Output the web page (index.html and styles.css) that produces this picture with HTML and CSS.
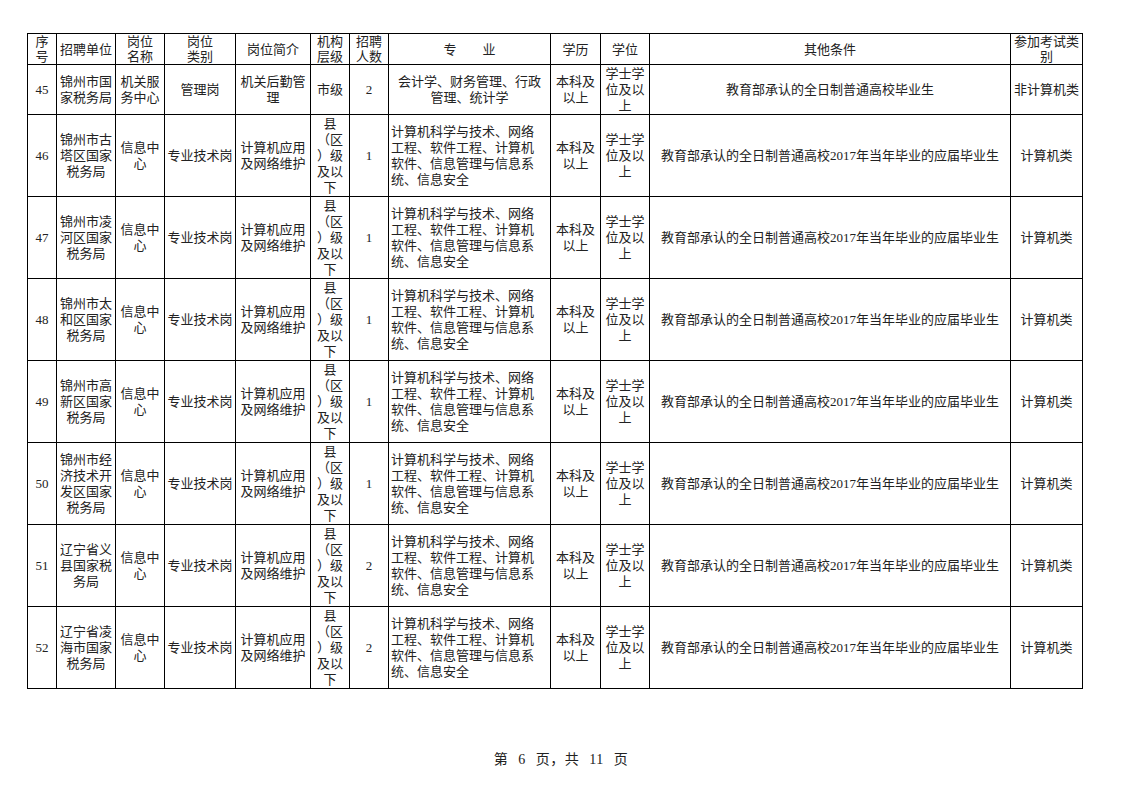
FILE: index.html
```html
<!DOCTYPE html>
<html lang="zh">
<head>
<meta charset="utf-8">
<link rel="stylesheet" href="styles.css">
</head>
<body>
<div class="page">
<table class="grid">
<colgroup>
<col class="c1"><col class="c2"><col class="c3"><col class="c4"><col class="c5"><col class="c6"><col class="c7"><col class="c8"><col class="c9"><col class="c10"><col class="c11"><col class="c12">
</colgroup>
<thead>
<tr class="head">
<th>序<br>号</th><th>招聘单位</th><th>岗位<br>名称</th><th>岗位<br>类别</th><th>岗位简介</th><th>机构<br>层级</th><th>招聘<br>人数</th><th>专　　业</th><th>学历</th><th>学位</th><th>其他条件</th><th>参加考试类<br>别</th>
</tr>
</thead>
<tbody>
<tr class="short">
<td class="num">45</td><td>锦州市国<br>家税务局</td><td>机关服<br>务中心</td><td>管理岗</td><td>机关后勤管<br>理</td><td>市级</td><td class="num">2</td><td>会计学、财务管理、行政<br>管理、统计学</td><td>本科及<br>以上</td><td>学士学<br>位及以<br>上</td><td>教育部承认的全日制普通高校毕业生</td><td>非计算机类</td>
</tr>
<tr class="tall">
<td class="num">46</td><td>锦州市古<br>塔区国家<br>税务局</td><td>信息中<br>心</td><td>专业技术岗</td><td>计算机应用<br>及网络维护</td><td>县<br>（区<br>）级<br>及以<br>下</td><td class="num">1</td><td class="left">计算机科学与技术、网络<br>工程、软件工程、计算机<br>软件、信息管理与信息系<br>统、信息安全</td><td>本科及<br>以上</td><td>学士学<br>位及以<br>上</td><td>教育部承认的全日制普通高校<span class="lat">2017</span>年当年毕业的应届毕业生</td><td>计算机类</td>
</tr>
<tr class="tall">
<td class="num">47</td><td>锦州市凌<br>河区国家<br>税务局</td><td>信息中<br>心</td><td>专业技术岗</td><td>计算机应用<br>及网络维护</td><td>县<br>（区<br>）级<br>及以<br>下</td><td class="num">1</td><td class="left">计算机科学与技术、网络<br>工程、软件工程、计算机<br>软件、信息管理与信息系<br>统、信息安全</td><td>本科及<br>以上</td><td>学士学<br>位及以<br>上</td><td>教育部承认的全日制普通高校<span class="lat">2017</span>年当年毕业的应届毕业生</td><td>计算机类</td>
</tr>
<tr class="tall">
<td class="num">48</td><td>锦州市太<br>和区国家<br>税务局</td><td>信息中<br>心</td><td>专业技术岗</td><td>计算机应用<br>及网络维护</td><td>县<br>（区<br>）级<br>及以<br>下</td><td class="num">1</td><td class="left">计算机科学与技术、网络<br>工程、软件工程、计算机<br>软件、信息管理与信息系<br>统、信息安全</td><td>本科及<br>以上</td><td>学士学<br>位及以<br>上</td><td>教育部承认的全日制普通高校<span class="lat">2017</span>年当年毕业的应届毕业生</td><td>计算机类</td>
</tr>
<tr class="tall">
<td class="num">49</td><td>锦州市高<br>新区国家<br>税务局</td><td>信息中<br>心</td><td>专业技术岗</td><td>计算机应用<br>及网络维护</td><td>县<br>（区<br>）级<br>及以<br>下</td><td class="num">1</td><td class="left">计算机科学与技术、网络<br>工程、软件工程、计算机<br>软件、信息管理与信息系<br>统、信息安全</td><td>本科及<br>以上</td><td>学士学<br>位及以<br>上</td><td>教育部承认的全日制普通高校<span class="lat">2017</span>年当年毕业的应届毕业生</td><td>计算机类</td>
</tr>
<tr class="tall">
<td class="num">50</td><td>锦州市经<br>济技术开<br>发区国家<br>税务局</td><td>信息中<br>心</td><td>专业技术岗</td><td>计算机应用<br>及网络维护</td><td>县<br>（区<br>）级<br>及以<br>下</td><td class="num">1</td><td class="left">计算机科学与技术、网络<br>工程、软件工程、计算机<br>软件、信息管理与信息系<br>统、信息安全</td><td>本科及<br>以上</td><td>学士学<br>位及以<br>上</td><td>教育部承认的全日制普通高校<span class="lat">2017</span>年当年毕业的应届毕业生</td><td>计算机类</td>
</tr>
<tr class="tall">
<td class="num">51</td><td>辽宁省义<br>县国家税<br>务局</td><td>信息中<br>心</td><td>专业技术岗</td><td>计算机应用<br>及网络维护</td><td>县<br>（区<br>）级<br>及以<br>下</td><td class="num">2</td><td class="left">计算机科学与技术、网络<br>工程、软件工程、计算机<br>软件、信息管理与信息系<br>统、信息安全</td><td>本科及<br>以上</td><td>学士学<br>位及以<br>上</td><td>教育部承认的全日制普通高校<span class="lat">2017</span>年当年毕业的应届毕业生</td><td>计算机类</td>
</tr>
<tr class="tall">
<td class="num">52</td><td>辽宁省凌<br>海市国家<br>税务局</td><td>信息中<br>心</td><td>专业技术岗</td><td>计算机应用<br>及网络维护</td><td>县<br>（区<br>）级<br>及以<br>下</td><td class="num">2</td><td class="left">计算机科学与技术、网络<br>工程、软件工程、计算机<br>软件、信息管理与信息系<br>统、信息安全</td><td>本科及<br>以上</td><td>学士学<br>位及以<br>上</td><td>教育部承认的全日制普通高校<span class="lat">2017</span>年当年毕业的应届毕业生</td><td>计算机类</td>
</tr>
</tbody>
</table>
</div>
<div class="footer">第 <span class="lat">6</span> 页，共 <span class="lat">11</span> 页</div>
</body>
</html>
```

FILE: styles.css
```css
html, body {
  margin: 0;
  padding: 0;
  background: #fff;
}
body {
  font-family: "Liberation Serif", "Noto Sans CJK SC", serif;
  color: #222;
  width: 1122px;
}
.page {
  padding: 33px 0 0 27px;
  width: 1055px;
}
.grid {
  border-collapse: collapse;
  table-layout: fixed;
  width: 1055px;
  font-size: 13px;
}
.c1 { width: 29px; }
.c2 { width: 59px; }
.c3 { width: 49px; }
.c4 { width: 71px; }
.c5 { width: 75px; }
.c6 { width: 39px; }
.c7 { width: 39px; }
.c8 { width: 162px; }
.c9 { width: 50px; }
.c10 { width: 49px; }
.c11 { width: 361px; }
.c12 { width: 72px; }
.grid th, .grid td {
  border: 1px solid #000;
  padding: 0 1px;
  text-align: center;
  vertical-align: middle;
  font-weight: normal;
  line-height: 16px;
  overflow: hidden;
  white-space: nowrap;
}
.grid th {
  line-height: 15px;
}
.head th { height: 30px; }
.short td { height: 49px; }
.tall td { height: 81px; }
.grid td.left {
  text-align: left;
  padding-left: 2px;
}
.num {
  font-size: 13px;
}
.lat {
  font-family: "Liberation Serif", serif;
}
.footer {
  margin-top: 59px;
  text-align: center;
  font-size: 14px;
  word-spacing: 6px;
  letter-spacing: 0.5px;
}
```
